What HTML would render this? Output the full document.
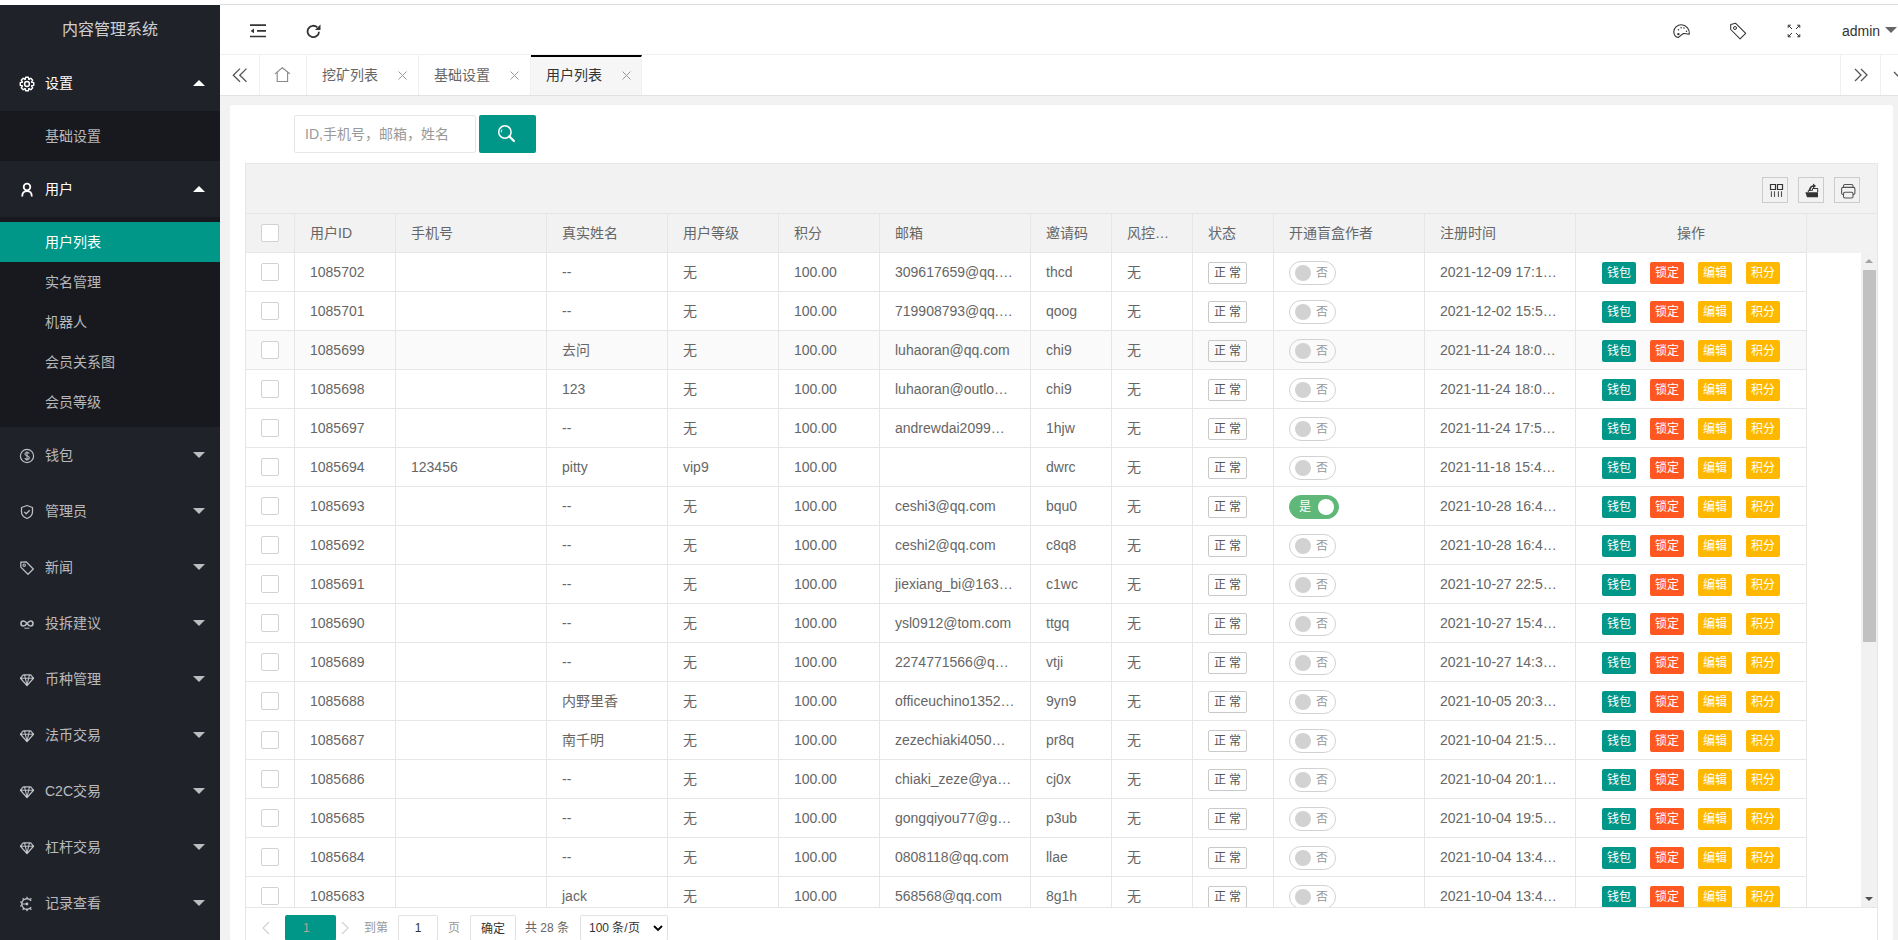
<!DOCTYPE html>
<html lang="zh-CN"><head><meta charset="utf-8"><title>用户列表</title>
<style>
*{box-sizing:border-box;margin:0;padding:0}
html,body{width:1898px;height:940px;overflow:hidden;background:#fff;font-family:"Liberation Sans",sans-serif;font-size:14px;color:#666}
.abs{position:absolute}
#side{position:absolute;left:0;top:5px;width:220px;height:935px;background:#20222a;overflow:hidden}
#logo{position:absolute;left:0;top:0;width:220px;height:50px;line-height:50px;text-align:center;color:rgba(255,255,255,.8);font-size:16px}
.nav{position:absolute;left:0;width:220px;height:56px;line-height:56px;color:rgba(255,255,255,.7)}
.nav .ico{position:absolute;left:19px;top:21px;width:16px;height:16px;line-height:0}
.nav .nt{position:absolute;left:45px;top:0}
.nav .nt.on{color:#fff}
.arr{position:absolute;left:193px;top:25px;width:0;height:0;border-left:6px solid transparent;border-right:6px solid transparent}
.arr.up{border-bottom:6px solid #fff;top:25px}
.arr.dn{border-top:6px solid rgba(255,255,255,.7);top:25px}
.sub{position:absolute;left:0;width:220px;background:#18191e}
.dd{position:absolute;left:0;width:220px;height:40px;line-height:40px;padding-left:45px;color:rgba(255,255,255,.7)}
.dd.act{background:#009688;color:#fff}
#topline{position:absolute;left:220px;top:4px;right:0;height:1px;background:#dcdcdc}
#header{position:absolute;left:220px;top:5px;right:0;height:50px;background:#fff;border-bottom:1px solid #f0f0f0}
#tabs{position:absolute;left:220px;top:55px;right:0;height:41px;background:#fff;border-bottom:1px solid #e2e2e2;box-shadow:0 1px 2px rgba(0,0,0,.05)}
#body{position:absolute;left:220px;top:96px;right:0;bottom:0;background:#f2f2f2}
#card{position:absolute;left:10px;top:9px;width:1663px;bottom:0;background:#fff;border-radius:2px}
.tab{position:absolute;top:0;height:40px;line-height:40px;color:#666;border-right:1px solid #f0f0f0}
.tab .x{position:absolute;top:0;font-size:14px;color:#999}
#tbl{position:absolute;left:245px;top:163px;width:1633px;height:745px;border:1px solid #e6e6e6;border-bottom:none}
#tool{position:absolute;left:0;top:0;width:1631px;height:50px;background:#f2f2f2;border-bottom:1px solid #e6e6e6}
#grid{position:absolute;left:0;top:50px;width:1631px;height:693px;overflow:hidden}
#ghead{position:absolute;left:0;top:0;width:1631px;height:39px;background:#f2f2f2}
.c{position:absolute;height:38px;line-height:38px;padding:0 15px;white-space:nowrap;overflow:hidden;color:#666}
.c.h{color:#666}
.vl{position:absolute;top:0;width:1px;height:694px;background:#e6e6e6}
.hl{position:absolute;left:0;width:1560px;height:1px;background:#e6e6e6}
.cb{display:inline-block;width:18px;height:18px;border:1px solid #d2d2d2;border-radius:2px;background:#fff;vertical-align:middle;margin-top:-3px}
.st{display:inline-block;height:22px;line-height:20px;padding:0 5px;border:1px solid #c9c9c9;border-radius:2px;font-size:12px;color:#555;vertical-align:middle;margin-top:0}
.sw{display:inline-block;position:relative;height:24px;line-height:22px;width:47px;border:1px solid #d2d2d2;border-radius:20px;font-size:12px;color:#999;vertical-align:middle;padding-left:26px;margin-top:0px}
.sw i{position:absolute;left:5px;top:3px;width:16px;height:16px;border-radius:50%;background:#d2d2d2}
.sw.on{background:#5fb878;border-color:#5fb878;color:#fff;width:50px;padding-left:9px}
.sw.on i{left:28px;background:#fff}
.bx{display:inline-block;height:22px;line-height:22px;padding:0 5px;font-size:12px;color:#fff;border-radius:2px;margin-left:14px;vertical-align:middle;margin-top:0px}
.bx:first-child{margin-left:0}
.bx.g{background:#009688}.bx.r{background:#ff5722}.bx.y{background:#ffb800}
#pager{position:absolute;left:245px;top:907px;width:1633px;height:33px;border-top:1px solid #e6e6e6;border-left:1px solid #e6e6e6;border-right:1px solid #e6e6e6}
</style></head><body>
<div id="side"><div id="logo">内容管理系统</div><div class="nav" style="top:50px"><span class="ico" style="color:#fff"><svg width="16" height="16" viewBox="0 0 16 16"><path d="M6.24 3.32 L6.63 1.24 L9.37 1.24 L9.76 3.32 L10.06 3.45 L11.81 2.25 L13.75 4.19 L12.55 5.94 L12.68 6.24 L14.76 6.63 L14.76 9.37 L12.68 9.76 L12.55 10.06 L13.75 11.81 L11.81 13.75 L10.06 12.55 L9.76 12.68 L9.37 14.76 L6.63 14.76 L6.24 12.68 L5.94 12.55 L4.19 13.75 L2.25 11.81 L3.45 10.06 L3.32 9.76 L1.24 9.37 L1.24 6.63 L3.32 6.24 L3.45 5.94 L2.25 4.19 L4.19 2.25 L5.94 3.45Z" fill="none" stroke="currentColor" stroke-width="1.4" stroke-linejoin="round"/><circle cx="8" cy="8" r="2.4" fill="none" stroke="currentColor" stroke-width="1.5"/></svg></span><span class="nt on">设置</span><span class="arr up"></span></div><div class="sub" style="top:106px;height:50px"><div class="dd" style="top:5px">基础设置</div></div><div class="nav" style="top:156px"><span class="ico" style="color:#fff"><svg width="16" height="16" viewBox="0 0 16 16"><circle cx="8" cy="5" r="3.3" fill="none" stroke="currentColor" stroke-width="1.8"/><path d="M3.2 14.5C3.2 11 5.3 9.2 8 9.2s4.8 1.8 4.8 5.3" fill="none" stroke="currentColor" stroke-width="1.8"/></svg></span><span class="nt on">用户</span><span class="arr up"></span></div><div class="sub" style="top:212px;height:210px"><div class="dd act" style="top:5px">用户列表</div><div class="dd" style="top:45px">实名管理</div><div class="dd" style="top:85px">机器人</div><div class="dd" style="top:125px">会员关系图</div><div class="dd" style="top:165px">会员等级</div></div><div class="nav" style="top:422px"><span class="ico"><svg width="16" height="16" viewBox="0 0 16 16"><circle cx="8" cy="8" r="6.6" fill="none" stroke="currentColor" stroke-width="1.2"/><path d="M10.2 5.6c-.4-.8-1.2-1.1-2.2-1.1-1.2 0-2.1.6-2.1 1.6 0 2.2 4.4 1.2 4.4 3.6 0 1-.9 1.7-2.3 1.7-1.1 0-1.9-.4-2.3-1.2M8 3.3v9.4" fill="none" stroke="currentColor" stroke-width="1.1"/></svg></span><span class="nt">钱包</span><span class="arr dn"></span></div><div class="nav" style="top:478px"><span class="ico"><svg width="16" height="16" viewBox="0 0 16 16"><path d="M8 1.5l5.5 2v4.3c0 3.3-2.4 5.6-5.5 6.7-3.1-1.1-5.5-3.4-5.5-6.7V3.5z" fill="none" stroke="currentColor" stroke-width="1.3" stroke-linejoin="round"/><path d="M5.3 7.9l1.9 1.9 3.5-3.5" fill="none" stroke="currentColor" stroke-width="1.3"/></svg></span><span class="nt">管理员</span><span class="arr dn"></span></div><div class="nav" style="top:534px"><span class="ico"><svg width="16" height="16" viewBox="0 0 16 16"><path d="M1.8 2.2l5.3-.4 7.2 7.2-5.3 5.3-7.2-7.2z" fill="none" stroke="currentColor" stroke-width="1.3" stroke-linejoin="round"/><circle cx="5.2" cy="5.2" r="1.2" fill="none" stroke="currentColor" stroke-width="1.1"/></svg></span><span class="nt">新闻</span><span class="arr dn"></span></div><div class="nav" style="top:590px"><span class="ico"><svg width="16" height="16" viewBox="0 0 16 16"><path d="M8 7.5C6.6 5.7 5.6 5 4.4 5 3 5 2 6.1 2 7.5S3 10 4.4 10c1.2 0 2.2-.7 3.6-2.5S10.4 5 11.6 5C13 5 14 6.1 14 7.5S13 10 11.6 10c-1.2 0-2.2-.7-3.6-2.5z" fill="none" stroke="currentColor" stroke-width="1.6"/><path d="M5.4 12.2h5" stroke="currentColor" stroke-width="1"/></svg></span><span class="nt">投拆建议</span><span class="arr dn"></span></div><div class="nav" style="top:646px"><span class="ico"><svg width="16" height="16" viewBox="0 0 16 16"><path d="M4.3 2.8h7.4l2.8 3.4L8 13.6 1.5 6.2z" fill="none" stroke="currentColor" stroke-width="1.3" stroke-linejoin="round"/><path d="M1.7 6.2h12.6M5.6 2.9L6.3 6.2 8 13.2 9.7 6.2l.7-3.3" fill="none" stroke="currentColor" stroke-width="1.1"/></svg></span><span class="nt">币种管理</span><span class="arr dn"></span></div><div class="nav" style="top:702px"><span class="ico"><svg width="16" height="16" viewBox="0 0 16 16"><path d="M4.3 2.8h7.4l2.8 3.4L8 13.6 1.5 6.2z" fill="none" stroke="currentColor" stroke-width="1.3" stroke-linejoin="round"/><path d="M1.7 6.2h12.6M5.6 2.9L6.3 6.2 8 13.2 9.7 6.2l.7-3.3" fill="none" stroke="currentColor" stroke-width="1.1"/></svg></span><span class="nt">法币交易</span><span class="arr dn"></span></div><div class="nav" style="top:758px"><span class="ico"><svg width="16" height="16" viewBox="0 0 16 16"><path d="M4.3 2.8h7.4l2.8 3.4L8 13.6 1.5 6.2z" fill="none" stroke="currentColor" stroke-width="1.3" stroke-linejoin="round"/><path d="M1.7 6.2h12.6M5.6 2.9L6.3 6.2 8 13.2 9.7 6.2l.7-3.3" fill="none" stroke="currentColor" stroke-width="1.1"/></svg></span><span class="nt">C2C交易</span><span class="arr dn"></span></div><div class="nav" style="top:814px"><span class="ico"><svg width="16" height="16" viewBox="0 0 16 16"><path d="M4.3 2.8h7.4l2.8 3.4L8 13.6 1.5 6.2z" fill="none" stroke="currentColor" stroke-width="1.3" stroke-linejoin="round"/><path d="M1.7 6.2h12.6M5.6 2.9L6.3 6.2 8 13.2 9.7 6.2l.7-3.3" fill="none" stroke="currentColor" stroke-width="1.1"/></svg></span><span class="nt">杠杆交易</span><span class="arr dn"></span></div><div class="nav" style="top:870px"><span class="ico"><svg width="16" height="16" viewBox="0 0 16 16"><path d="M12.18 4.74A5.3 5.3 0 1 0 12.18 11.26" fill="none" stroke="currentColor" stroke-width="1.4"/><path d="M8.00 2.20L8.00 0.80M4.59 3.31L3.77 2.18M2.48 6.21L1.15 5.78M2.48 9.79L1.15 10.22M4.59 12.69L3.77 13.82M8.00 13.80L8.00 15.20M11.41 12.69L12.23 13.82M11.41 3.31L12.23 2.18" stroke="currentColor" stroke-width="1.3"/><path d="M2.6 8H8" stroke="currentColor" stroke-width="1"/><circle cx="8" cy="8" r="1.4" fill="currentColor"/></svg></span><span class="nt">记录查看</span><span class="arr dn"></span></div></div>
<div id="topline"></div>
<div id="header">
 <svg class="abs" style="left:30px;top:19px" width="16" height="14" viewBox="0 0 16 14"><path d="M0 1.1h16M7 6.9h9M0 12.5h16" stroke="#333" stroke-width="1.7"/><path d="M0.6 6.9L4 4.6v4.6z" fill="#333"/></svg>
 <svg class="abs" style="left:86px;top:19px" width="15" height="15" viewBox="0 0 15 15"><path d="M13 7.7A5.7 5.7 0 1 1 11.3 3.4" fill="none" stroke="#333" stroke-width="1.8"/><path d="M14.5 0.5v5.5H9z" fill="#333"/></svg>
 <svg class="abs" style="left:1453px;top:19px" width="18" height="15" viewBox="0 0 18 15"><path d="M16.4 10C16.9 5 13 .8 8.4.8 4.1.8.8 3.9.8 7.6c0 3.4 2.2 6 4.4 5.8 1.8-.2 3-3.2 5.3-3.8 2-.5 3.6 1 5.9.4z" fill="none" stroke="#333" stroke-width="1.1"/><circle cx="5.4" cy="10.1" r="1.2" fill="#333"/><circle cx="5.5" cy="5.7" r=".75" fill="#333"/><circle cx="8.1" cy="3.7" r=".75" fill="#333"/><circle cx="11" cy="4" r=".75" fill="#333"/><circle cx="13.5" cy="7.2" r=".75" fill="#333"/></svg>
 <svg class="abs" style="left:1509px;top:17px" width="19" height="19" viewBox="0 0 19 19"><path d="M1.7 2.5L6.7 1.3l10 10-5.6 5.6-9.4-9.4z" fill="none" stroke="#333" stroke-width="1.05" stroke-linejoin="round"/><circle cx="6" cy="6" r="1.5" fill="none" stroke="#333" stroke-width="1"/></svg>
 <svg class="abs" style="left:1567px;top:19px" width="14" height="14" viewBox="0 0 14 14"><path d="M1.2 1.2l3.8 3.8M1.2 1.2h2.6M1.2 1.2v2.6M12.8 1.2L9 5M12.8 1.2h-2.6M12.8 1.2v2.6M1.2 12.8L5 9M1.2 12.8h2.6M1.2 12.8v-2.6M12.8 12.8L9 9M12.8 12.8h-2.6M12.8 12.8v-2.6" fill="none" stroke="#333" stroke-width="1"/></svg>
 <div class="abs" style="left:1622px;top:0;height:50px;line-height:52px;color:#333;font-size:14px">admin</div>
 <div class="abs" style="left:1665px;top:22px;width:0;height:0;border-left:6px solid transparent;border-right:6px solid transparent;border-top:6px solid #666"></div>
</div>
<div id="tabs">
 <div class="tab" style="left:0;width:40px;text-align:center"><svg class="abs" style="left:12px;top:68px;top:13px" width="16" height="15" viewBox="0 0 16 15"><path d="M8 .6L1.3 7.2 8 13.8M14.5 .6L7.8 7.2l6.7 6.6" fill="none" stroke="#555" stroke-width="1.3"/></svg></div>
 <div class="tab" style="left:40px;width:47px"><svg class="abs" style="left:14px;top:12px" width="17" height="15" viewBox="0 0 17 15"><path d="M1 6.8L8.3.8l7.5 6M3.2 5.6v8.9h10.4V5.6" fill="none" stroke="#888" stroke-width="1.1"/></svg></div>
 <div class="tab" style="left:87px;width:112px"><span class="abs" style="left:15px">挖矿列表</span><svg class="abs" width="9" height="9" viewBox="0 0 9 9" style="left:91px;top:16px"><path d="M.5.5l8 8M8.5.5l-8 8" stroke="#999" stroke-width="1"/></svg></div>
 <div class="tab" style="left:199px;width:112px"><span class="abs" style="left:15px">基础设置</span><svg class="abs" width="9" height="9" viewBox="0 0 9 9" style="left:91px;top:16px"><path d="M.5.5l8 8M8.5.5l-8 8" stroke="#999" stroke-width="1"/></svg></div>
 <div class="tab" style="left:311px;width:111px;background:#f6f6f6;border-top:2px solid #000"><span class="abs" style="left:15px;top:-2px;color:#333">用户列表</span><svg class="abs" width="9" height="9" viewBox="0 0 9 9" style="left:91px;top:14px"><path d="M.5.5l8 8M8.5.5l-8 8" stroke="#999" stroke-width="1"/></svg></div>
 <div class="tab" style="left:1620px;width:41px;border-left:1px solid #f0f0f0;border-right:1px solid #f0f0f0"><svg class="abs" style="left:12px;top:13px" width="15" height="14" viewBox="0 0 15 14"><path d="M2 1l6 6-6 6M8 1l6 6-6 6" fill="none" stroke="#555" stroke-width="1.3"/></svg></div>
 <div class="tab" style="left:1661px;width:40px"><svg class="abs" style="left:12px;top:16px" width="14" height="8" viewBox="0 0 14 8"><path d="M1 1l6 6 6-6" fill="none" stroke="#555" stroke-width="1.3"/></svg></div>
</div>
<div id="body"><div id="card"></div></div>
<div class="abs" style="left:294px;top:115px;width:182px;height:38px;border:1px solid #e6e6e6;border-radius:2px;background:#fff;line-height:36px;padding-left:10px;color:#999">ID,手机号，邮箱，姓名</div>
<div class="abs" style="left:479px;top:115px;width:57px;height:38px;background:#009688;border-radius:2px"><svg class="abs" style="left:0;top:0" width="57" height="38" viewBox="0 0 57 38"><circle cx="25.9" cy="17" r="6.2" fill="none" stroke="#fff" stroke-width="1.5"/><path d="M23 14.5c-.7.8-.9 1.8-.7 2.8" fill="none" stroke="#fff" stroke-width="1"/><path d="M30.3 21.4l4.6 4.6" stroke="#fff" stroke-width="2.2" stroke-linecap="round"/></svg></div>
<div id="tbl">
 <div id="tool">
  <div class="abs" style="left:1516px;top:13px;width:26px;height:26px;border:1px solid #ccc"><svg class="abs" style="left:0;top:0" width="24" height="24" viewBox="0 0 24 24"><path d="M7.5 6.5h5v5h-5zM14.5 6.5h5v5h-5z" fill="none" stroke="#333" stroke-width="1.2"/><path d="M8.4 13.3v5.6M11.5 13.3v5.6M15.4 13.3v5.6M18.5 13.3v5.6" stroke="#555" stroke-width="1.1"/></svg></div>
  <div class="abs" style="left:1552px;top:13px;width:26px;height:26px;border:1px solid #ccc"><svg class="abs" style="left:0;top:0" width="24" height="24" viewBox="0 0 24 24"><path d="M6.4 14.3h12.6v4.9H8z" fill="#333"/><path d="M9.3 14V12.3h4.2v-1.8h5.2V14" fill="none" stroke="#333" stroke-width="1"/><path d="M10.8 12.8c-.3-2.6 1.2-4.6 3.6-4.8" fill="none" stroke="#333" stroke-width="1.6"/><path d="M14 5.6l3 2.4-3 2.4z" fill="#333"/></svg></div>
  <div class="abs" style="left:1588px;top:13px;width:26px;height:26px;border:1px solid #ccc"><svg class="abs" style="left:0;top:0" width="24" height="24" viewBox="0 0 24 24"><path d="M8.5 9.4V8c0-.8.6-1.5 1.5-1.5h6.5c.9 0 1.5.7 1.5 1.5v1.4" fill="none" stroke="#555" stroke-width="1.1"/><path d="M8.5 16.5H8c-.8 0-1.4-.6-1.4-1.4v-4.3c0-.8.6-1.4 1.4-1.4h10.5c.8 0 1.4.6 1.4 1.4v4.3c0 .8-.6 1.4-1.4 1.4H18" fill="none" stroke="#555" stroke-width="1.1"/><path d="M10 14.2h6.5c.8 0 1.5.7 1.5 1.5v2.8c0 .8-.7 1.5-1.5 1.5H10c-.8 0-1.5-.7-1.5-1.5v-2.8c0-.8.7-1.5 1.5-1.5z" fill="#f2f2f2" stroke="#555" stroke-width="1.1"/></svg></div>
 </div>
 <div id="grid">
  <div id="ghead"></div>
  <div class="abs" style="left:0;top:117px;width:1560px;height:38px;background:#fafafa"></div>
  <div class="vl" style="left:48px"></div><div class="vl" style="left:149px"></div><div class="vl" style="left:300px"></div><div class="vl" style="left:421px"></div><div class="vl" style="left:532px"></div><div class="vl" style="left:633px"></div><div class="vl" style="left:784px"></div><div class="vl" style="left:865px"></div><div class="vl" style="left:946px"></div><div class="vl" style="left:1027px"></div><div class="vl" style="left:1178px"></div><div class="vl" style="left:1329px"></div><div class="vl" style="left:1560px"></div><div class="hl" style="top:38px"></div><div class="hl" style="top:77px"></div><div class="hl" style="top:116px"></div><div class="hl" style="top:155px"></div><div class="hl" style="top:194px"></div><div class="hl" style="top:233px"></div><div class="hl" style="top:272px"></div><div class="hl" style="top:311px"></div><div class="hl" style="top:350px"></div><div class="hl" style="top:389px"></div><div class="hl" style="top:428px"></div><div class="hl" style="top:467px"></div><div class="hl" style="top:506px"></div><div class="hl" style="top:545px"></div><div class="hl" style="top:584px"></div><div class="hl" style="top:623px"></div><div class="hl" style="top:662px"></div><div class="hl" style="top:701px"></div>
  <div class="c h" style="left:0px;top:0px;width:48px"><span class="cb"></span></div><div class="c h" style="left:49px;top:0px;width:100px">用户ID</div><div class="c h" style="left:150px;top:0px;width:150px">手机号</div><div class="c h" style="left:301px;top:0px;width:120px">真实姓名</div><div class="c h" style="left:422px;top:0px;width:110px">用户等级</div><div class="c h" style="left:533px;top:0px;width:100px">积分</div><div class="c h" style="left:634px;top:0px;width:150px">邮箱</div><div class="c h" style="left:785px;top:0px;width:80px">邀请码</div><div class="c h" style="left:866px;top:0px;width:80px">风控…</div><div class="c h" style="left:947px;top:0px;width:80px">状态</div><div class="c h" style="left:1028px;top:0px;width:150px">开通盲盒作者</div><div class="c h" style="left:1179px;top:0px;width:150px">注册时间</div><div class="c h" style="left:1330px;top:0px;width:230px;text-align:center">操作</div><div class="c" style="left:0px;top:39px;width:48px"><span class="cb"></span></div><div class="c" style="left:49px;top:39px;width:100px">1085702</div><div class="c" style="left:150px;top:39px;width:150px"></div><div class="c" style="left:301px;top:39px;width:120px">--</div><div class="c" style="left:422px;top:39px;width:110px">无</div><div class="c" style="left:533px;top:39px;width:100px">100.00</div><div class="c" style="left:634px;top:39px;width:150px">309617659@qq.…</div><div class="c" style="left:785px;top:39px;width:80px">thcd</div><div class="c" style="left:866px;top:39px;width:80px">无</div><div class="c" style="left:947px;top:39px;width:80px"><span class="st">正 常</span></div><div class="c" style="left:1028px;top:39px;width:150px"><span class="sw"><i></i>否</span></div><div class="c" style="left:1179px;top:39px;width:150px">2021-12-09 17:1…</div><div class="c" style="left:1330px;top:39px;width:230px;text-align:center"><span class="bx g">钱包</span><span class="bx r">锁定</span><span class="bx y">编辑</span><span class="bx y">积分</span></div><div class="c" style="left:0px;top:78px;width:48px"><span class="cb"></span></div><div class="c" style="left:49px;top:78px;width:100px">1085701</div><div class="c" style="left:150px;top:78px;width:150px"></div><div class="c" style="left:301px;top:78px;width:120px">--</div><div class="c" style="left:422px;top:78px;width:110px">无</div><div class="c" style="left:533px;top:78px;width:100px">100.00</div><div class="c" style="left:634px;top:78px;width:150px">719908793@qq.…</div><div class="c" style="left:785px;top:78px;width:80px">qoog</div><div class="c" style="left:866px;top:78px;width:80px">无</div><div class="c" style="left:947px;top:78px;width:80px"><span class="st">正 常</span></div><div class="c" style="left:1028px;top:78px;width:150px"><span class="sw"><i></i>否</span></div><div class="c" style="left:1179px;top:78px;width:150px">2021-12-02 15:5…</div><div class="c" style="left:1330px;top:78px;width:230px;text-align:center"><span class="bx g">钱包</span><span class="bx r">锁定</span><span class="bx y">编辑</span><span class="bx y">积分</span></div><div class="c" style="left:0px;top:117px;width:48px"><span class="cb"></span></div><div class="c" style="left:49px;top:117px;width:100px">1085699</div><div class="c" style="left:150px;top:117px;width:150px"></div><div class="c" style="left:301px;top:117px;width:120px">去问</div><div class="c" style="left:422px;top:117px;width:110px">无</div><div class="c" style="left:533px;top:117px;width:100px">100.00</div><div class="c" style="left:634px;top:117px;width:150px">luhaoran@qq.com</div><div class="c" style="left:785px;top:117px;width:80px">chi9</div><div class="c" style="left:866px;top:117px;width:80px">无</div><div class="c" style="left:947px;top:117px;width:80px"><span class="st">正 常</span></div><div class="c" style="left:1028px;top:117px;width:150px"><span class="sw"><i></i>否</span></div><div class="c" style="left:1179px;top:117px;width:150px">2021-11-24 18:0…</div><div class="c" style="left:1330px;top:117px;width:230px;text-align:center"><span class="bx g">钱包</span><span class="bx r">锁定</span><span class="bx y">编辑</span><span class="bx y">积分</span></div><div class="c" style="left:0px;top:156px;width:48px"><span class="cb"></span></div><div class="c" style="left:49px;top:156px;width:100px">1085698</div><div class="c" style="left:150px;top:156px;width:150px"></div><div class="c" style="left:301px;top:156px;width:120px">123</div><div class="c" style="left:422px;top:156px;width:110px">无</div><div class="c" style="left:533px;top:156px;width:100px">100.00</div><div class="c" style="left:634px;top:156px;width:150px">luhaoran@outlo…</div><div class="c" style="left:785px;top:156px;width:80px">chi9</div><div class="c" style="left:866px;top:156px;width:80px">无</div><div class="c" style="left:947px;top:156px;width:80px"><span class="st">正 常</span></div><div class="c" style="left:1028px;top:156px;width:150px"><span class="sw"><i></i>否</span></div><div class="c" style="left:1179px;top:156px;width:150px">2021-11-24 18:0…</div><div class="c" style="left:1330px;top:156px;width:230px;text-align:center"><span class="bx g">钱包</span><span class="bx r">锁定</span><span class="bx y">编辑</span><span class="bx y">积分</span></div><div class="c" style="left:0px;top:195px;width:48px"><span class="cb"></span></div><div class="c" style="left:49px;top:195px;width:100px">1085697</div><div class="c" style="left:150px;top:195px;width:150px"></div><div class="c" style="left:301px;top:195px;width:120px">--</div><div class="c" style="left:422px;top:195px;width:110px">无</div><div class="c" style="left:533px;top:195px;width:100px">100.00</div><div class="c" style="left:634px;top:195px;width:150px">andrewdai2099…</div><div class="c" style="left:785px;top:195px;width:80px">1hjw</div><div class="c" style="left:866px;top:195px;width:80px">无</div><div class="c" style="left:947px;top:195px;width:80px"><span class="st">正 常</span></div><div class="c" style="left:1028px;top:195px;width:150px"><span class="sw"><i></i>否</span></div><div class="c" style="left:1179px;top:195px;width:150px">2021-11-24 17:5…</div><div class="c" style="left:1330px;top:195px;width:230px;text-align:center"><span class="bx g">钱包</span><span class="bx r">锁定</span><span class="bx y">编辑</span><span class="bx y">积分</span></div><div class="c" style="left:0px;top:234px;width:48px"><span class="cb"></span></div><div class="c" style="left:49px;top:234px;width:100px">1085694</div><div class="c" style="left:150px;top:234px;width:150px">123456</div><div class="c" style="left:301px;top:234px;width:120px">pitty</div><div class="c" style="left:422px;top:234px;width:110px">vip9</div><div class="c" style="left:533px;top:234px;width:100px">100.00</div><div class="c" style="left:634px;top:234px;width:150px"></div><div class="c" style="left:785px;top:234px;width:80px">dwrc</div><div class="c" style="left:866px;top:234px;width:80px">无</div><div class="c" style="left:947px;top:234px;width:80px"><span class="st">正 常</span></div><div class="c" style="left:1028px;top:234px;width:150px"><span class="sw"><i></i>否</span></div><div class="c" style="left:1179px;top:234px;width:150px">2021-11-18 15:4…</div><div class="c" style="left:1330px;top:234px;width:230px;text-align:center"><span class="bx g">钱包</span><span class="bx r">锁定</span><span class="bx y">编辑</span><span class="bx y">积分</span></div><div class="c" style="left:0px;top:273px;width:48px"><span class="cb"></span></div><div class="c" style="left:49px;top:273px;width:100px">1085693</div><div class="c" style="left:150px;top:273px;width:150px"></div><div class="c" style="left:301px;top:273px;width:120px">--</div><div class="c" style="left:422px;top:273px;width:110px">无</div><div class="c" style="left:533px;top:273px;width:100px">100.00</div><div class="c" style="left:634px;top:273px;width:150px">ceshi3@qq.com</div><div class="c" style="left:785px;top:273px;width:80px">bqu0</div><div class="c" style="left:866px;top:273px;width:80px">无</div><div class="c" style="left:947px;top:273px;width:80px"><span class="st">正 常</span></div><div class="c" style="left:1028px;top:273px;width:150px"><span class="sw on">是<i></i></span></div><div class="c" style="left:1179px;top:273px;width:150px">2021-10-28 16:4…</div><div class="c" style="left:1330px;top:273px;width:230px;text-align:center"><span class="bx g">钱包</span><span class="bx r">锁定</span><span class="bx y">编辑</span><span class="bx y">积分</span></div><div class="c" style="left:0px;top:312px;width:48px"><span class="cb"></span></div><div class="c" style="left:49px;top:312px;width:100px">1085692</div><div class="c" style="left:150px;top:312px;width:150px"></div><div class="c" style="left:301px;top:312px;width:120px">--</div><div class="c" style="left:422px;top:312px;width:110px">无</div><div class="c" style="left:533px;top:312px;width:100px">100.00</div><div class="c" style="left:634px;top:312px;width:150px">ceshi2@qq.com</div><div class="c" style="left:785px;top:312px;width:80px">c8q8</div><div class="c" style="left:866px;top:312px;width:80px">无</div><div class="c" style="left:947px;top:312px;width:80px"><span class="st">正 常</span></div><div class="c" style="left:1028px;top:312px;width:150px"><span class="sw"><i></i>否</span></div><div class="c" style="left:1179px;top:312px;width:150px">2021-10-28 16:4…</div><div class="c" style="left:1330px;top:312px;width:230px;text-align:center"><span class="bx g">钱包</span><span class="bx r">锁定</span><span class="bx y">编辑</span><span class="bx y">积分</span></div><div class="c" style="left:0px;top:351px;width:48px"><span class="cb"></span></div><div class="c" style="left:49px;top:351px;width:100px">1085691</div><div class="c" style="left:150px;top:351px;width:150px"></div><div class="c" style="left:301px;top:351px;width:120px">--</div><div class="c" style="left:422px;top:351px;width:110px">无</div><div class="c" style="left:533px;top:351px;width:100px">100.00</div><div class="c" style="left:634px;top:351px;width:150px">jiexiang_bi@163…</div><div class="c" style="left:785px;top:351px;width:80px">c1wc</div><div class="c" style="left:866px;top:351px;width:80px">无</div><div class="c" style="left:947px;top:351px;width:80px"><span class="st">正 常</span></div><div class="c" style="left:1028px;top:351px;width:150px"><span class="sw"><i></i>否</span></div><div class="c" style="left:1179px;top:351px;width:150px">2021-10-27 22:5…</div><div class="c" style="left:1330px;top:351px;width:230px;text-align:center"><span class="bx g">钱包</span><span class="bx r">锁定</span><span class="bx y">编辑</span><span class="bx y">积分</span></div><div class="c" style="left:0px;top:390px;width:48px"><span class="cb"></span></div><div class="c" style="left:49px;top:390px;width:100px">1085690</div><div class="c" style="left:150px;top:390px;width:150px"></div><div class="c" style="left:301px;top:390px;width:120px">--</div><div class="c" style="left:422px;top:390px;width:110px">无</div><div class="c" style="left:533px;top:390px;width:100px">100.00</div><div class="c" style="left:634px;top:390px;width:150px">ysl0912@tom.com</div><div class="c" style="left:785px;top:390px;width:80px">ttgq</div><div class="c" style="left:866px;top:390px;width:80px">无</div><div class="c" style="left:947px;top:390px;width:80px"><span class="st">正 常</span></div><div class="c" style="left:1028px;top:390px;width:150px"><span class="sw"><i></i>否</span></div><div class="c" style="left:1179px;top:390px;width:150px">2021-10-27 15:4…</div><div class="c" style="left:1330px;top:390px;width:230px;text-align:center"><span class="bx g">钱包</span><span class="bx r">锁定</span><span class="bx y">编辑</span><span class="bx y">积分</span></div><div class="c" style="left:0px;top:429px;width:48px"><span class="cb"></span></div><div class="c" style="left:49px;top:429px;width:100px">1085689</div><div class="c" style="left:150px;top:429px;width:150px"></div><div class="c" style="left:301px;top:429px;width:120px">--</div><div class="c" style="left:422px;top:429px;width:110px">无</div><div class="c" style="left:533px;top:429px;width:100px">100.00</div><div class="c" style="left:634px;top:429px;width:150px">2274771566@q…</div><div class="c" style="left:785px;top:429px;width:80px">vtji</div><div class="c" style="left:866px;top:429px;width:80px">无</div><div class="c" style="left:947px;top:429px;width:80px"><span class="st">正 常</span></div><div class="c" style="left:1028px;top:429px;width:150px"><span class="sw"><i></i>否</span></div><div class="c" style="left:1179px;top:429px;width:150px">2021-10-27 14:3…</div><div class="c" style="left:1330px;top:429px;width:230px;text-align:center"><span class="bx g">钱包</span><span class="bx r">锁定</span><span class="bx y">编辑</span><span class="bx y">积分</span></div><div class="c" style="left:0px;top:468px;width:48px"><span class="cb"></span></div><div class="c" style="left:49px;top:468px;width:100px">1085688</div><div class="c" style="left:150px;top:468px;width:150px"></div><div class="c" style="left:301px;top:468px;width:120px">内野里香</div><div class="c" style="left:422px;top:468px;width:110px">无</div><div class="c" style="left:533px;top:468px;width:100px">100.00</div><div class="c" style="left:634px;top:468px;width:150px">officeuchino1352…</div><div class="c" style="left:785px;top:468px;width:80px">9yn9</div><div class="c" style="left:866px;top:468px;width:80px">无</div><div class="c" style="left:947px;top:468px;width:80px"><span class="st">正 常</span></div><div class="c" style="left:1028px;top:468px;width:150px"><span class="sw"><i></i>否</span></div><div class="c" style="left:1179px;top:468px;width:150px">2021-10-05 20:3…</div><div class="c" style="left:1330px;top:468px;width:230px;text-align:center"><span class="bx g">钱包</span><span class="bx r">锁定</span><span class="bx y">编辑</span><span class="bx y">积分</span></div><div class="c" style="left:0px;top:507px;width:48px"><span class="cb"></span></div><div class="c" style="left:49px;top:507px;width:100px">1085687</div><div class="c" style="left:150px;top:507px;width:150px"></div><div class="c" style="left:301px;top:507px;width:120px">南千明</div><div class="c" style="left:422px;top:507px;width:110px">无</div><div class="c" style="left:533px;top:507px;width:100px">100.00</div><div class="c" style="left:634px;top:507px;width:150px">zezechiaki4050…</div><div class="c" style="left:785px;top:507px;width:80px">pr8q</div><div class="c" style="left:866px;top:507px;width:80px">无</div><div class="c" style="left:947px;top:507px;width:80px"><span class="st">正 常</span></div><div class="c" style="left:1028px;top:507px;width:150px"><span class="sw"><i></i>否</span></div><div class="c" style="left:1179px;top:507px;width:150px">2021-10-04 21:5…</div><div class="c" style="left:1330px;top:507px;width:230px;text-align:center"><span class="bx g">钱包</span><span class="bx r">锁定</span><span class="bx y">编辑</span><span class="bx y">积分</span></div><div class="c" style="left:0px;top:546px;width:48px"><span class="cb"></span></div><div class="c" style="left:49px;top:546px;width:100px">1085686</div><div class="c" style="left:150px;top:546px;width:150px"></div><div class="c" style="left:301px;top:546px;width:120px">--</div><div class="c" style="left:422px;top:546px;width:110px">无</div><div class="c" style="left:533px;top:546px;width:100px">100.00</div><div class="c" style="left:634px;top:546px;width:150px">chiaki_zeze@ya…</div><div class="c" style="left:785px;top:546px;width:80px">cj0x</div><div class="c" style="left:866px;top:546px;width:80px">无</div><div class="c" style="left:947px;top:546px;width:80px"><span class="st">正 常</span></div><div class="c" style="left:1028px;top:546px;width:150px"><span class="sw"><i></i>否</span></div><div class="c" style="left:1179px;top:546px;width:150px">2021-10-04 20:1…</div><div class="c" style="left:1330px;top:546px;width:230px;text-align:center"><span class="bx g">钱包</span><span class="bx r">锁定</span><span class="bx y">编辑</span><span class="bx y">积分</span></div><div class="c" style="left:0px;top:585px;width:48px"><span class="cb"></span></div><div class="c" style="left:49px;top:585px;width:100px">1085685</div><div class="c" style="left:150px;top:585px;width:150px"></div><div class="c" style="left:301px;top:585px;width:120px">--</div><div class="c" style="left:422px;top:585px;width:110px">无</div><div class="c" style="left:533px;top:585px;width:100px">100.00</div><div class="c" style="left:634px;top:585px;width:150px">gongqiyou77@g…</div><div class="c" style="left:785px;top:585px;width:80px">p3ub</div><div class="c" style="left:866px;top:585px;width:80px">无</div><div class="c" style="left:947px;top:585px;width:80px"><span class="st">正 常</span></div><div class="c" style="left:1028px;top:585px;width:150px"><span class="sw"><i></i>否</span></div><div class="c" style="left:1179px;top:585px;width:150px">2021-10-04 19:5…</div><div class="c" style="left:1330px;top:585px;width:230px;text-align:center"><span class="bx g">钱包</span><span class="bx r">锁定</span><span class="bx y">编辑</span><span class="bx y">积分</span></div><div class="c" style="left:0px;top:624px;width:48px"><span class="cb"></span></div><div class="c" style="left:49px;top:624px;width:100px">1085684</div><div class="c" style="left:150px;top:624px;width:150px"></div><div class="c" style="left:301px;top:624px;width:120px">--</div><div class="c" style="left:422px;top:624px;width:110px">无</div><div class="c" style="left:533px;top:624px;width:100px">100.00</div><div class="c" style="left:634px;top:624px;width:150px">0808118@qq.com</div><div class="c" style="left:785px;top:624px;width:80px">llae</div><div class="c" style="left:866px;top:624px;width:80px">无</div><div class="c" style="left:947px;top:624px;width:80px"><span class="st">正 常</span></div><div class="c" style="left:1028px;top:624px;width:150px"><span class="sw"><i></i>否</span></div><div class="c" style="left:1179px;top:624px;width:150px">2021-10-04 13:4…</div><div class="c" style="left:1330px;top:624px;width:230px;text-align:center"><span class="bx g">钱包</span><span class="bx r">锁定</span><span class="bx y">编辑</span><span class="bx y">积分</span></div><div class="c" style="left:0px;top:663px;width:48px"><span class="cb"></span></div><div class="c" style="left:49px;top:663px;width:100px">1085683</div><div class="c" style="left:150px;top:663px;width:150px"></div><div class="c" style="left:301px;top:663px;width:120px">jack</div><div class="c" style="left:422px;top:663px;width:110px">无</div><div class="c" style="left:533px;top:663px;width:100px">100.00</div><div class="c" style="left:634px;top:663px;width:150px">568568@qq.com</div><div class="c" style="left:785px;top:663px;width:80px">8g1h</div><div class="c" style="left:866px;top:663px;width:80px">无</div><div class="c" style="left:947px;top:663px;width:80px"><span class="st">正 常</span></div><div class="c" style="left:1028px;top:663px;width:150px"><span class="sw"><i></i>否</span></div><div class="c" style="left:1179px;top:663px;width:150px">2021-10-04 13:4…</div><div class="c" style="left:1330px;top:663px;width:230px;text-align:center"><span class="bx g">钱包</span><span class="bx r">锁定</span><span class="bx y">编辑</span><span class="bx y">积分</span></div>
  <div class="abs" style="left:1615px;top:39px;width:16px;height:655px;background:#f1f1f1"></div>
  <div class="abs" style="left:1617px;top:56px;width:13px;height:372px;background:#c1c1c1"></div>
  <div class="abs" style="left:1619px;top:45px;width:0;height:0;border-left:4px solid transparent;border-right:4px solid transparent;border-bottom:4px solid #a3a3a3"></div>
  <div class="abs" style="left:1619px;top:683px;width:0;height:0;border-left:4px solid transparent;border-right:4px solid transparent;border-top:4px solid #505050"></div>
 </div>
</div>
<div id="pager">
 <svg class="abs" style="left:16px;top:13px" width="8" height="14" viewBox="0 0 8 14"><path d="M7 1L1 7l6 6" fill="none" stroke="#d2d2d2" stroke-width="1.2"/></svg>
 <div class="abs" style="left:39px;top:7px;width:51px;height:26px;background:#009688;border-radius:2px;color:#a8a89a;text-align:left;padding-left:18px;line-height:26px;font-size:12px">1</div>
 <svg class="abs" style="left:95px;top:13px" width="8" height="14" viewBox="0 0 8 14"><path d="M1 1l6 6-6 6" fill="none" stroke="#d2d2d2" stroke-width="1.2"/></svg>
 <div class="abs" style="left:118px;top:7px;line-height:26px;font-size:12px;color:#999">到第</div>
 <div class="abs" style="left:152px;top:7px;width:40px;height:26px;border:1px solid #e2e2e2;border-radius:2px;text-align:center;line-height:24px;font-size:12px;color:#333">1</div>
 <div class="abs" style="left:202px;top:7px;line-height:26px;font-size:12px;color:#999">页</div>
 <div class="abs" style="left:224px;top:7px;width:46px;height:26px;border:1px solid #e2e2e2;border-radius:2px;text-align:center;line-height:26px;font-size:12px;color:#333">确定</div>
 <div class="abs" style="left:279px;top:7px;line-height:26px;font-size:12px;color:#666">共 28 条</div>
 <div class="abs" style="left:334px;top:7px;width:88px;height:26px;border:1px solid #e2e2e2;border-radius:2px;line-height:24px;font-size:12px;color:#333;padding-left:8px">100 条/页<svg class="abs" style="left:72px;top:9px" width="10" height="7" viewBox="0 0 10 7"><path d="M1 1l4 4 4-4" fill="none" stroke="#000" stroke-width="1.8"/></svg></div>
</div>
<div class="abs" style="left:1893px;top:96px;width:5px;height:844px;background:#f2f2f2"></div>
</body></html>
